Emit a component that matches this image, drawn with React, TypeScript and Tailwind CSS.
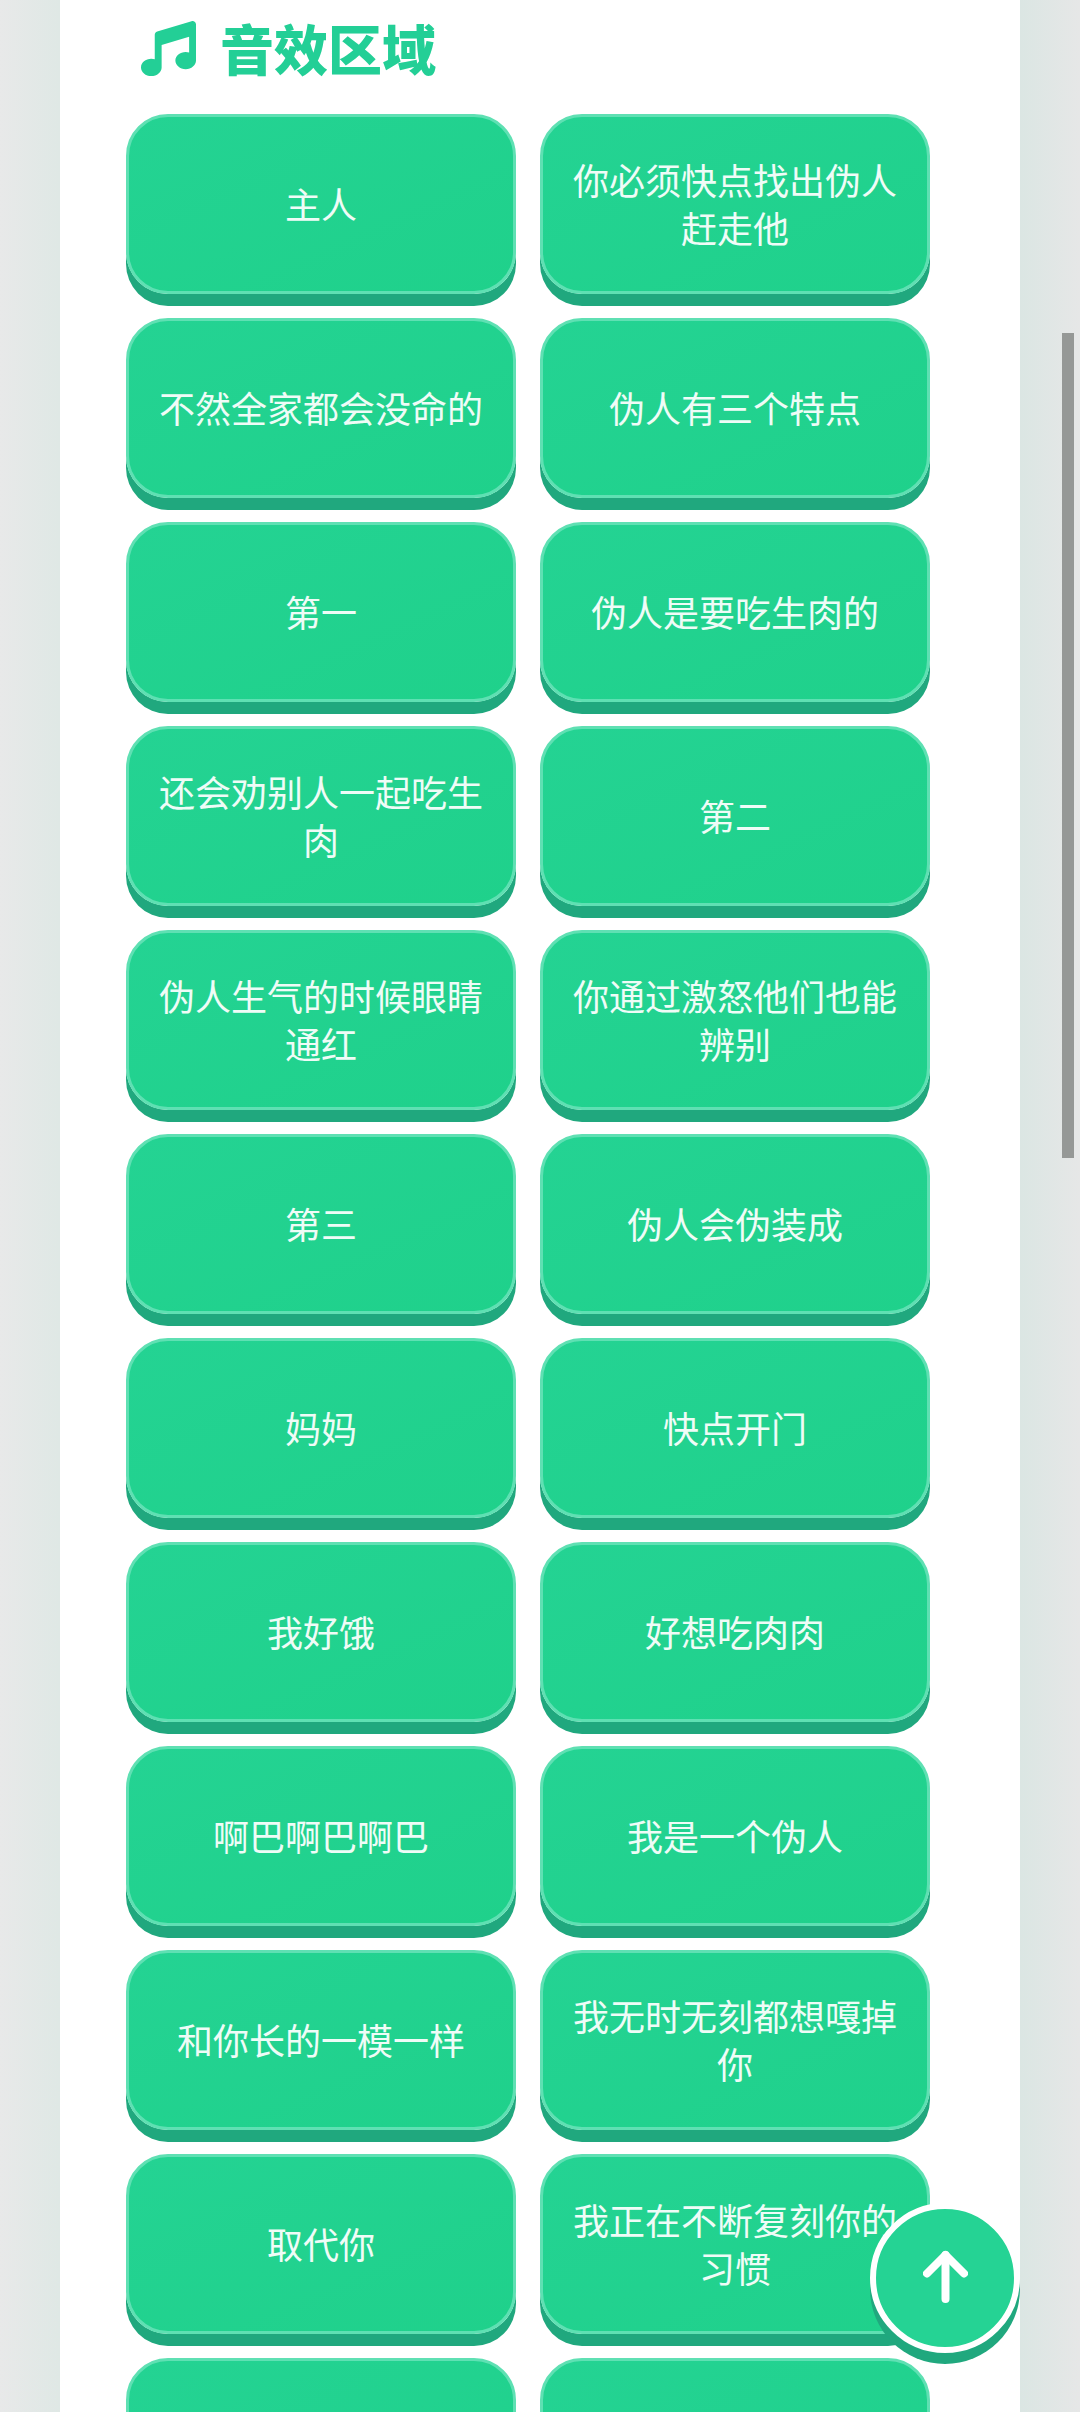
import { FaMusic } from "react-icons/fa6";

const SOUNDS = [
  "主人",
  "你必须快点找出伪人赶走他",
  "不然全家都会没命的",
  "伪人有三个特点",
  "第一",
  "伪人是要吃生肉的",
  "还会劝别人一起吃生肉",
  "第二",
  "伪人生气的时候眼睛通红",
  "你通过激怒他们也能辨别",
  "第三",
  "伪人会伪装成",
  "妈妈",
  "快点开门",
  "我好饿",
  "好想吃肉肉",
  "啊巴啊巴啊巴",
  "我是一个伪人",
  "和你长的一模一样",
  "我无时无刻都想嘎掉你",
  "取代你",
  "我正在不断复刻你的习惯",
  "",
  "",
];

function SoundButton({ label }: { label: string }) {
  return (
    <button className="flex h-[180px] w-[390px] items-center justify-center rounded-[42px] border-[3px] border-[#5fe0b3] bg-gradient-to-br from-[#24d393] to-[#1fd18b] px-[24px] pb-[2px] text-center text-[36px] leading-[48px] text-[#effcf7] shadow-[0_12px_0_#20a87e]">
      {label}
    </button>
  );
}

export default function App() {
  return (
    <div className="relative flex h-[2412px] w-[1080px] overflow-hidden font-['Noto_Sans_CJK_SC','Noto_Sans',sans-serif]">
      {/* side gutters */}
      <div className="w-[60px] bg-gradient-to-r from-[#e8e9e9] to-[#dfe8e5]" />

      <main className="w-[960px] bg-white pl-[66px]">
        <div className="flex h-[114px] items-start pl-[15px] pt-[21px]">
          <FaMusic className="h-[55px] w-[55px] text-[#23cf96]" />
          <h2 className="-mt-[2px] ml-[24px] text-[54px] leading-[58px] font-black text-[#23cf96]">音效区域</h2>
        </div>
        <div className="grid w-[804px] grid-cols-2 gap-[24px]">
          {SOUNDS.map((s, i) => (
            <SoundButton key={i} label={s} />
          ))}
        </div>
      </main>

      <div className="flex-1 bg-gradient-to-r from-[#dbe6e3] to-[#e6e7e7]" />

      {/* scrollbar */}
      <div className="absolute top-[333px] left-[1062px] h-[825px] w-[12px] bg-[#959896]" />

      {/* back to top */}
      <button className="absolute top-[2203px] left-[870px] flex h-[150px] w-[150px] items-center justify-center rounded-full border-[6px] border-white bg-[#25d394] pb-[3px] shadow-[0_11px_0_#20a87e]">
        <svg width="45" height="53" viewBox="0 0 45 53" fill="none" stroke="white" strokeWidth="8" strokeLinecap="round" strokeLinejoin="round">
          <path d="M22.5 49V5" />
          <path d="M4 23.5 22.5 5 41 23.5" />
        </svg>
      </button>
    </div>
  );
}
